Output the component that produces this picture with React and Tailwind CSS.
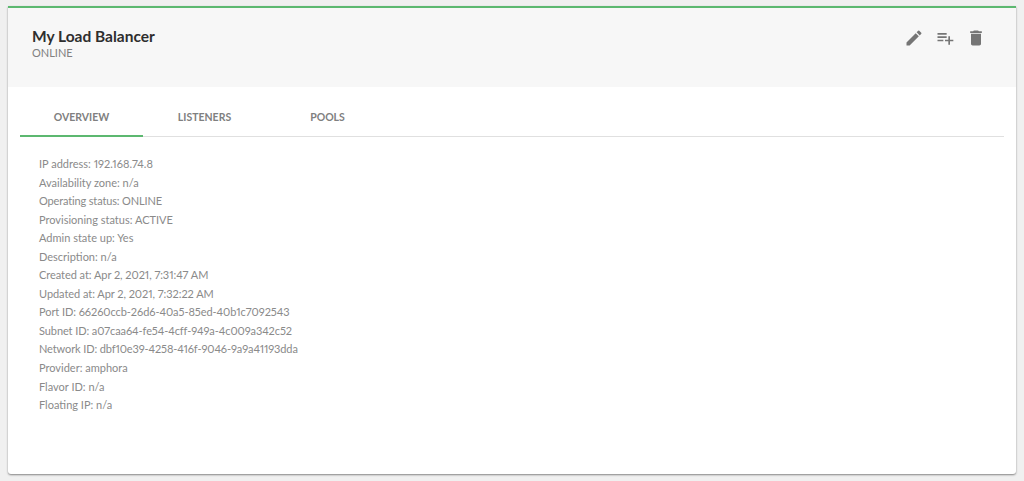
import { MdEdit, MdPlaylistAdd, MdDelete } from "react-icons/md";

const details = [
  ["IP address: 192.168.74.8", ""],
  ["Availability zone: n/a", ""],
  ["Operating status: ONLINE", "tracking-[-0.15px]"],
  ["Provisioning status: ACTIVE", ""],
  ["Admin state up: Yes", ""],
  ["Description: n/a", ""],
  ["Created at: Apr 2, 2021, 7:31:47 AM", "tracking-[-0.05px]"],
  ["Updated at: Apr 2, 2021, 7:32:22 AM", "tracking-[-0.05px]"],
  ["Port ID: 66260ccb-26d6-40a5-85ed-40b1c7092543", "tracking-[-0.07px]"],
  ["Subnet ID: a07caa64-fe54-4cff-949a-4c009a342c52", "tracking-[-0.09px]"],
  ["Network ID: dbf10e39-4258-416f-9046-9a9a41193dda", "tracking-[-0.12px]"],
  ["Provider: amphora", ""],
  ["Flavor ID: n/a", ""],
  ["Floating IP: n/a", ""],
];

const tabs = ["OVERVIEW", "LISTENERS", "POOLS"];

const App = () => {
  return (
    <div className="h-[481px] overflow-hidden bg-[#f0f0f0] px-2 pt-1.5 font-['Lato',sans-serif] proportional-nums">
      <div className="h-[468px] rounded-b-[3px] border-t-2 border-[#5cb870] bg-white shadow-[0_1px_2px_rgba(0,0,0,0.45)]">
        <div className="flex h-[79px] justify-between bg-[#f7f7f7] pl-6 pr-[30px] pt-[18px]">
          <div>
            <h1 className="text-[15.5px] leading-[20px] font-bold text-[#2e2e2e]">My Load Balancer</h1>
            <p className="text-[11px] leading-[14px] text-[#808080]">ONLINE</p>
          </div>
          <div className="flex gap-[11px] pt-[1.5px] text-[20px] text-[#757575]">
            <MdEdit />
            <MdPlaylistAdd />
            <MdDelete />
          </div>
        </div>
        <div className="mx-3 flex h-[50px] border-b border-[#e0e0e0]">
          {tabs.map((tab, i) => (
            <div
              key={tab}
              className={`flex h-[50px] w-[123px] items-center justify-center border-b-2 pt-[13px] text-[10.5px] font-bold text-[#808080] ${
                i === 0 ? "border-[#5cb870]" : "border-transparent"
              }`}
            >
              {tab}
            </div>
          ))}
        </div>
        <div className="pl-[31px] pt-[18px]">
          {details.map(([line, spacing]) => (
            <p key={line} className={`text-[11px] leading-[18.55px] text-[#8a8a8a] ${spacing}`}>
              {line}
            </p>
          ))}
        </div>
      </div>
    </div>
  );
};

export default App;
